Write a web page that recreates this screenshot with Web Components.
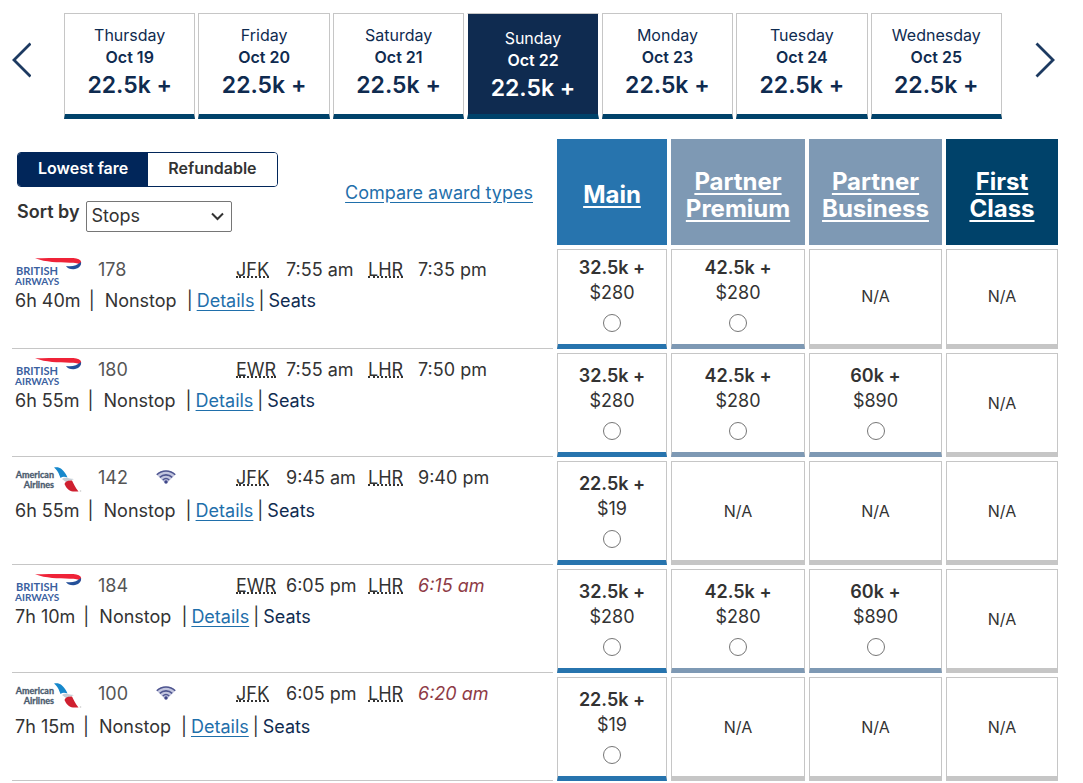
<!DOCTYPE html>
<html lang="en">
<head>
<meta charset="utf-8">
<meta name="viewport" content="width=device-width, initial-scale=1">
<title>Award flights JFK - LHR</title>
<style>
  body {
    margin: 0;
    padding: 13px 21px 0 8px;
    background: #fff;
    color: #333;
    font-family: Inter, "Open Sans", sans-serif;
    font-size: 18px;
  }
</style>
</head>
<body>
<date-carousel>
  <date-tab day="Thursday" date="Oct 19" price="22.5k +"></date-tab>
  <date-tab day="Friday" date="Oct 20" price="22.5k +"></date-tab>
  <date-tab day="Saturday" date="Oct 21" price="22.5k +"></date-tab>
  <date-tab day="Sunday" date="Oct 22" price="22.5k +" selected></date-tab>
  <date-tab day="Monday" date="Oct 23" price="22.5k +"></date-tab>
  <date-tab day="Tuesday" date="Oct 24" price="22.5k +"></date-tab>
  <date-tab day="Wednesday" date="Oct 25" price="22.5k +"></date-tab>
</date-carousel>
<fare-matrix></fare-matrix>

<script>
class DateCarousel extends HTMLElement {
  constructor() {
    super();
    this.attachShadow({ mode: "open" }).innerHTML = `
      <style>
        :host {
          display: grid;
          grid-template-columns: 20px 1fr 20px;
          column-gap: 33px;
          align-items: center;
          padding: 0 7px 0 3px;
        }
        .days {
          display: grid;
          grid-template-columns: repeat(7, 1fr);
          gap: 3px;
        }
        button {
          padding: 0;
          border: 0;
          background: none;
          height: 36px;
          margin-bottom: 13px;
          cursor: pointer;
        }
        svg {
          display: block;
          width: 20px;
          height: 36px;
          fill: none;
          stroke: #1d3a61;
          stroke-width: 2.8;
        }
      </style>
      <button aria-label="Previous dates"><svg viewBox="0 0 20 36"><path d="M19.500 1.500 3 18l16.500 16.500"/></svg></button>
      <div class="days"><slot></slot></div>
      <button aria-label="Next dates"><svg viewBox="0 0 20 36"><path d="M1.500 1.500 18 18 1.500 34.500"/></svg></button>
    `;
  }
}

class DateTab extends HTMLElement {
  connectedCallback() {
    this.attachShadow({ mode: "open" }).innerHTML = `
      <style>
        :host {
          display: block;
          min-width: 0;
        }
        button {
          display: flex;
          flex-direction: column;
          align-items: center;
          box-sizing: border-box;
          width: 100%;
          height: 106px;
          padding: 10px 0 0;
          border: 1px solid #c6c6c6;
          border-bottom: 5px solid #00426a;
          background: #fff;
          color: #0f2b50;
          font: 16px/22px Inter, "Open Sans", sans-serif;
          cursor: pointer;
        }
        .date {
          font-weight: 600;
        }
        .price {
          font-size: 23px;
          line-height: 34px;
          font-weight: 600;
        }
        :host([selected]) button {
          padding-top: 13px;
          background: #0f2b50;
          border-left-color: #fff;
          border-right-color: #fff;
          color: #fff;
        }
      </style>
      <button>
        <span>${this.getAttribute("day")}</span>
        <span class="date">${this.getAttribute("date")}</span>
        <span class="price">${this.getAttribute("price")}</span>
      </button>
    `;
  }
}

class FareToggle extends HTMLElement {
  constructor() {
    super();
    this.attachShadow({ mode: "open" }).innerHTML = `
      <style>
        :host {
          display: inline-flex;
          border: 1px solid #01265a;
          border-radius: 4px;
          overflow: hidden;
        }
        button {
          height: 33px;
          padding: 0 20px 3px;
          border: 0;
          background: #fff;
          color: #333;
          font: 600 16px/20px Inter, "Open Sans", sans-serif;
          cursor: pointer;
        }
        button[aria-pressed="true"] {
          background: #01265a;
          color: #fff;
        }
      </style>
      <button aria-pressed="true">Lowest fare</button>
      <button aria-pressed="false">Refundable</button>
    `;
    const buttons = this.shadowRoot.querySelectorAll("button");
    buttons.forEach((button) => {
      button.addEventListener("click", () => {
        buttons.forEach((b) => b.setAttribute("aria-pressed", b === button));
      });
    });
  }
}

class SortPicker extends HTMLElement {
  constructor() {
    super();
    this.attachShadow({ mode: "open" }).innerHTML = `
      <style>
        :host {
          display: flex;
          gap: 6px;
        }
        label {
          font-weight: 600;
          line-height: 22px;
        }
        .box {
          position: relative;
        }
        select {
          display: block;
          appearance: none;
          box-sizing: border-box;
          width: 146px;
          height: 31px;
          padding: 0 24px 2px 5px;
          border: 1px solid #767676;
          border-radius: 2px;
          background-color: #fff;
          color: #333;
          font: 18px Inter, "Open Sans", sans-serif;
        }
        svg {
          position: absolute;
          right: 8px;
          top: 11px;
          width: 13px;
          height: 9px;
          fill: none;
          stroke: #333;
          stroke-width: 2;
          pointer-events: none;
        }
      </style>
      <label for="sort">Sort by</label>
      <div class="box">
        <select id="sort">
          <option>Stops</option>
          <option>Price</option>
          <option>Duration</option>
        </select>
        <svg viewBox="0 0 13 9"><path d="M1 1.500 6.500 7 12 1.500"/></svg>
      </div>
    `;
  }
}

const LOGOS = {
  BA: `
    <svg viewBox="0 0 68 32" role="img" aria-label="British Airways">
      <path d="M21 .3C30 0 40 0 50 0c8 0 14-.3 16.500 2.500 1 1.500.8 3-.3 4.500C65 5.300 61 5 56 4.800 44 4.400 32 4.400 21 .3z" fill="#ef2338"/>
      <path d="M52 8c6 1 11-.4 15-4 .8 4-3 7-7.500 7.200-3.500.1-6-1-7.500-3.200z" fill="#24509a"/>
      <g fill="#3a5f9f" font-family="Lato, sans-serif" font-weight="bold">
        <text x="2" y="17" font-size="11">BRITISH</text>
        <text x="1" y="27" font-size="10">AIRWAYS</text>
      </g>
    </svg>`,
  AA: `
    <svg viewBox="0 0 68 32" role="img" aria-label="American Airlines">
      <path d="M40 1.500c3-.5 5.500-.2 7.500 1.500 3 2.500 4.500 5 6 8.500-3-1-5-1-7 .5C45 8 44 5 40 1.500z" fill="#1688cc"/>
      <path d="M48 13c2-1.800 5-1.500 8-.5 2 .3 3 .3 4 .5-2 1-5 1.500-8 3z" fill="#c5ced6"/>
      <path d="M50.500 18c.5-2 3-4 7.500-3.500 2 3.500 3 7 6.500 11H59c-4 0-7-4-8.500-7.500z" fill="#cf2030"/>
      <circle cx="66.500" cy="25" r=".8" fill="#c9c9c9"/>
      <g fill="#4a5a6d" stroke="#4a5a6d" stroke-width=".3" font-family="Lato, sans-serif" font-size="9" font-weight="bold" text-anchor="end">
        <text x="40" y="12">American</text>
        <text x="40" y="22">Airlines</text>
      </g>
    </svg>`,
};

const WIFI = `
  <svg class="wifi" viewBox="0 0 20 14" role="img" aria-label="Wi-Fi">
    <path d="M.5 4.500c5-5.300 14-5.300 19 0L11 13H9z" fill="#c3c6df"/>
    <g fill="none" stroke="#4f5690" stroke-width="1.600">
      <path d="M.8 4.800c5-5 13.400-5 18.400 0"/>
      <path d="M3.800 7.400c3.500-3.400 8.900-3.400 12.400 0"/>
      <path d="M6.800 10c2-1.900 4.400-1.900 6.400 0"/>
    </g>
    <circle cx="10" cy="12" r="1.700" fill="#3f4688"/>
  </svg>`;

class FlightSummary extends HTMLElement {
  set flight(flight) {
    this._flight = flight;
    this.render();
  }

  render() {
    const f = this._flight;
    const root = this.shadowRoot || this.attachShadow({ mode: "open" });
    root.innerHTML = `
      <style>
        :host {
          display: block;
          color: #333;
          line-height: 24px;
        }
        .times {
          display: grid;
          grid-template-columns: 84px 58px 80px 50px 82px 50px 1fr;
          height: 31px;
          white-space: nowrap;
        }
        .wide {
          height: 33px;
        }
        .logo svg {
          display: block;
          width: 68px;
          height: 32px;
        }
        .number {
          color: #555;
        }
        .wifi {
          width: 20px;
          height: 14px;
          display: block;
          margin-top: 4px;
        }
        abbr {
          display: inline-block;
          height: 18px;
          line-height: 24px;
          border-bottom: 2px dotted #333;
          text-decoration: none;
        }
        .next-day {
          color: #8e3b46;
          font-style: italic;
        }
        .details {
          display: flex;
          gap: 4px;
          padding-left: 1px;
        }
        .duration {
          margin-right: 4px;
        }
        .stops {
          padding: 0 6px;
        }
        a {
          color: #1f6fab;
          text-underline-offset: 3px;
        }
        .seats {
          color: #0f2b50;
          text-decoration: none;
        }
      </style>
      <div class="times ${f.wifi ? "wide" : ""}">
        <span class="logo">${LOGOS[f.airline]}</span>
        <span class="number">${f.number}</span>
        <span>${f.wifi ? WIFI : ""}</span>
        <span><abbr>${f.from}</abbr></span>
        <span>${f.departs}</span>
        <span><abbr>LHR</abbr></span>
        <span class="${f.nextDay ? "next-day" : ""}">${f.arrives}</span>
      </div>
      <div class="details">
        <span class="duration">${f.duration}</span>
        <span>|</span>
        <span class="stops">Nonstop</span>
        <span>|</span>
        <a href="#details-${f.number}">Details</a>
        <span>|</span>
        <a class="seats" href="#seats-${f.number}">Seats</a>
      </div>
    `;
  }
}

class FareOption extends HTMLElement {
  constructor() {
    super();
    this.attachShadow({ mode: "open" }).innerHTML = `
      <style>
        :host {
          display: flex;
          flex-direction: column;
          align-items: center;
          line-height: 25px;
        }
        .points {
          font-weight: 600;
        }
      </style>
      <span class="points"><slot name="points"></slot></span>
      <span><slot name="cash"></slot></span>
      <slot></slot>
    `;
  }
}

const CABINS = [
  { id: "main", label: "Main" },
  { id: "premium", label: "Partner Premium" },
  { id: "business", label: "Partner Business" },
  { id: "first", label: "First Class" },
];

const FLIGHTS = [
  { airline: "BA", number: 178, from: "JFK", departs: "7:55 am", arrives: "7:35 pm", duration: "6h 40m",
    fares: { main: ["32.5k +", "$280"], premium: ["42.5k +", "$280"] } },
  { airline: "BA", number: 180, from: "EWR", departs: "7:55 am", arrives: "7:50 pm", duration: "6h 55m",
    fares: { main: ["32.5k +", "$280"], premium: ["42.5k +", "$280"], business: ["60k +", "$890"] } },
  { airline: "AA", number: 142, wifi: true, from: "JFK", departs: "9:45 am", arrives: "9:40 pm", duration: "6h 55m",
    fares: { main: ["22.5k +", "$19"] } },
  { airline: "BA", number: 184, from: "EWR", departs: "6:05 pm", arrives: "6:15 am", nextDay: true, duration: "7h 10m",
    fares: { main: ["32.5k +", "$280"], premium: ["42.5k +", "$280"], business: ["60k +", "$890"] } },
  { airline: "AA", number: 100, wifi: true, from: "JFK", departs: "6:05 pm", arrives: "6:20 am", nextDay: true, duration: "7h 15m",
    fares: { main: ["22.5k +", "$19"] } },
];

class FareMatrix extends HTMLElement {
  connectedCallback() {
    this.attachShadow({ mode: "open" });
    this.render();
  }

  fareCell(flight, cabin) {
    const fare = flight.fares[cabin.id];
    if (!fare) {
      return `<td class="fare none">N/A</td>`;
    }
    // radios stay in this root so that they form one group
    return `
      <td class="fare ${cabin.id}">
        <fare-option>
          <span slot="points">${fare[0]}</span>
          <span slot="cash">${fare[1]}</span>
          <input type="radio" name="fare" aria-label="Flight ${flight.number}, ${cabin.label}">
        </fare-option>
      </td>`;
  }

  render() {
    this.shadowRoot.innerHTML = `
      <style>
        :host {
          display: block;
          margin-top: 16px;
        }
        table {
          width: 100%;
          table-layout: fixed;
          border-collapse: separate;
          border-spacing: 4px;
        }
        col.main { width: 110px; }
        col.premium { width: 134px; }
        col.business { width: 133px; }
        col.first { width: 112px; }
        th, td {
          box-sizing: border-box;
          padding: 0;
        }
        thead th {
          height: 106px;
          font-size: 24px;
          font-weight: 700;
          line-height: 27px;
        }
        thead td {
          vertical-align: top;
        }
        th a {
          display: block;
          padding: 5px 8px 0;
          color: #fff;
          text-decoration-thickness: 2px;
          text-underline-offset: 3px;
        }
        th.main { background: #2774ae; }
        th.premium, th.business { background: #7e99b4; }
        th.first { background: #00426a; }
        .tools {
          display: flex;
          justify-content: space-between;
          padding: 13px 20px 0 5px;
        }
        .tools a {
          margin-top: 30px;
          color: #1f6fab;
          line-height: 22px;
          text-underline-offset: 3px;
        }
        sort-picker {
          margin-top: 14px;
        }
        fare-toggle {
          vertical-align: top;
        }
        .flight {
          vertical-align: top;
          padding: 5px 0 0 2px;
          border-bottom: 1px solid #c6c6c6;
        }
        .fare {
          height: 104px;
          border: 1px solid #c6c6c6;
          border-bottom-width: 5px;
          text-align: center;
        }
        tbody tr:first-child .fare {
          height: 100px;
          padding-bottom: 3px;
        }
        tbody tr:first-child .flight {
          padding-top: 9px;
        }
        .fare.main { border-bottom-color: #2774ae; }
        .fare.premium, .fare.business { border-bottom-color: #7e99b4; }
        .none {
          font-size: 16px;
        }
        input {
          width: 18px;
          height: 18px;
          margin: 9px 0 4px;
        }
      </style>
      <table>
        <colgroup>
          <col>
          ${CABINS.map((c) => `<col class="${c.id}">`).join("")}
        </colgroup>
        <thead>
          <tr>
            <td>
              <div class="tools">
                <div>
                  <fare-toggle></fare-toggle>
                  <sort-picker></sort-picker>
                </div>
                <a href="#award-types">Compare award types</a>
              </div>
            </td>
            ${CABINS.map((c) => `<th class="${c.id}" scope="col"><a href="#${c.id}">${c.label}</a></th>`).join("")}
          </tr>
        </thead>
        <tbody>
          ${FLIGHTS.map((f) => `
            <tr>
              <td class="flight"><flight-summary></flight-summary></td>
              ${CABINS.map((c) => this.fareCell(f, c)).join("")}
            </tr>`).join("")}
        </tbody>
      </table>
    `;
    this.shadowRoot.querySelectorAll("flight-summary").forEach((item, i) => {
      item.flight = FLIGHTS[i];
    });
  }
}

customElements.define("date-tab", DateTab);
customElements.define("date-carousel", DateCarousel);
customElements.define("fare-toggle", FareToggle);
customElements.define("sort-picker", SortPicker);
customElements.define("flight-summary", FlightSummary);
customElements.define("fare-option", FareOption);
customElements.define("fare-matrix", FareMatrix);
</script>
</body>
</html>
